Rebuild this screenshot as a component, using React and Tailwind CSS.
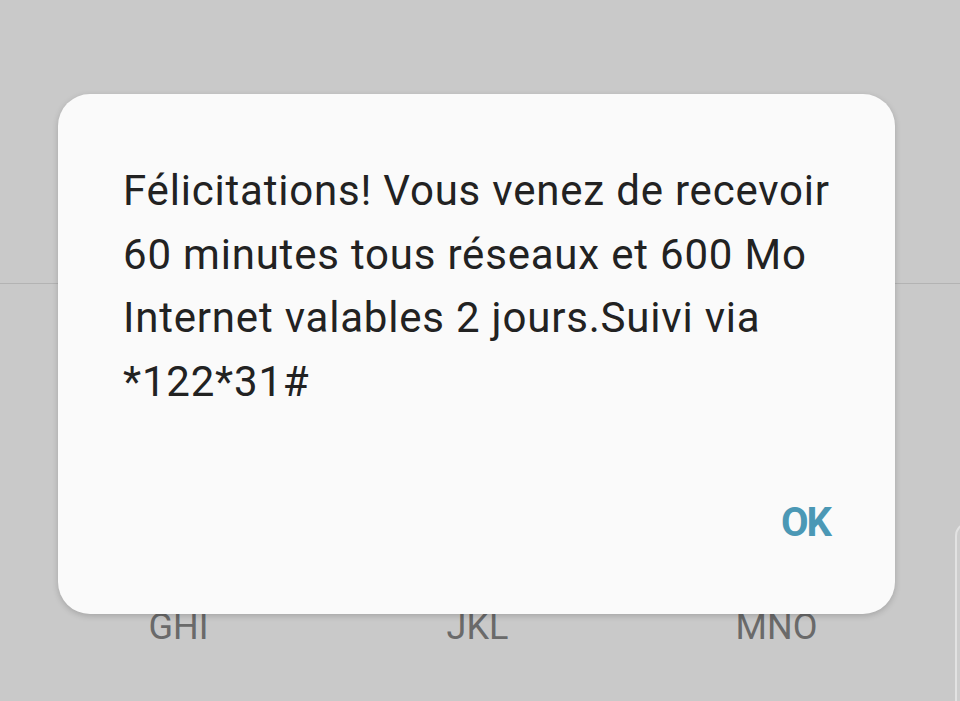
const roboto = { fontFamily: "Roboto, 'Liberation Sans', sans-serif" };

const keys = ["GHI", "JKL", "MNO"];

export default function App() {
  return (
    <div className="relative h-[701px] w-full overflow-hidden bg-[#c9c9c9]" style={roboto}>
      {/* backdrop: top area + dial pad */}
      <div className="h-[284px] border-b border-[#b3b3b3]" />
      <div className="grid grid-cols-[299px_299px_299px] pl-[29px] pt-[325px]">
        {keys.map((k) => (
          <div key={k} className="text-center text-[36px] leading-none text-[#6a6a6a]">
            {k}
          </div>
        ))}
      </div>

      {/* edge of panel at right */}
      <div className="absolute left-[955px] top-[522px] h-[200px] w-[40px] rounded-tl-[14px] border-l-2 border-t-2 border-[#e2e2e2] bg-[#cdcdcd]" />

      {/* dialog */}
      <div className="absolute left-[58px] top-[94px] flex h-[520px] w-[837px] flex-col rounded-[32px] bg-[#fafafa] shadow-[0_2px_6px_rgba(0,0,0,0.18)]">
        <p className="pl-[65px] pr-[30px] pt-[65px] text-[42px] leading-[63.5px] tracking-[0.8px] text-[#222222]">
          Félicitations! Vous venez de recevoir 60 minutes tous réseaux et 600 Mo Internet valables 2 jours.Suivi via *122*31#
        </p>
        <div className="mt-auto flex justify-end pb-[71px] pr-[65px]">
          <button className="text-[40px] font-bold leading-none tracking-[-2px] text-[#4b98b5]">OK</button>
        </div>
      </div>
    </div>
  );
}
